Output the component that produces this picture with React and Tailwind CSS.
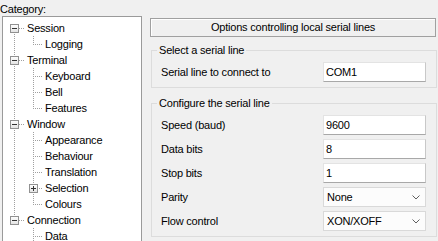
const FONT = { fontFamily: '"Liberation Sans", Arial, sans-serif' };

const tree = [
  { label: "Session", level: 0, box: "minus", top: false, bottom: true },
  { label: "Logging", level: 1, bottom: false, root: true },
  { label: "Terminal", level: 0, box: "minus", top: true, bottom: true },
  { label: "Keyboard", level: 1, bottom: true, root: true },
  { label: "Bell", level: 1, bottom: true, root: true },
  { label: "Features", level: 1, bottom: false, root: true },
  { label: "Window", level: 0, box: "minus", top: true, bottom: true },
  { label: "Appearance", level: 1, bottom: true, root: true },
  { label: "Behaviour", level: 1, bottom: true, root: true },
  { label: "Translation", level: 1, bottom: true, root: true },
  { label: "Selection", level: 1, box: "plus", bottom: true, root: true },
  { label: "Colours", level: 1, bottom: false, root: true },
  { label: "Connection", level: 0, box: "minus", top: true, bottom: false },
  { label: "Data", level: 1, bottom: true, root: false },
];

const DOT = { stroke: "#a0a0a0", strokeWidth: 1, strokeDasharray: "1 1", shapeRendering: "crispEdges" };

function Expander({ x, kind }) {
  return (
    <g shapeRendering="crispEdges">
      <rect x={x - 3.5} y={4.5} width={8} height={8} fill="url(#exp)" stroke="#919191" />
      <line x1={x - 2} y1={8.5} x2={x + 3} y2={8.5} stroke="#333" />
      {kind === "plus" && <line x1={x + 0.5} y1={6} x2={x + 0.5} y2={11} stroke="#333" />}
    </g>
  );
}

function Lines({ row }) {
  const w = row.level === 0 ? 24 : 42;
  return (
    <svg width={w} height={16} className="shrink-0">
      <defs>
        <linearGradient id="exp" x1="0" y1="0" x2="0" y2="1">
          <stop offset="0" stopColor="#ffffff" />
          <stop offset="1" stopColor="#e2e2e2" />
        </linearGradient>
      </defs>
      {row.level === 0 ? (
        <>
          {row.top && <line x1={11.5} y1={0} x2={11.5} y2={8} {...DOT} />}
          {row.bottom && <line x1={11.5} y1={8} x2={11.5} y2={16} {...DOT} />}
          <line x1={16} y1={8.5} x2={22} y2={8.5} {...DOT} />
          <Expander x={11} kind={row.box} />
        </>
      ) : (
        <>
          {row.root && <line x1={11.5} y1={0} x2={11.5} y2={16} {...DOT} />}
          <line x1={30.5} y1={0} x2={30.5} y2={row.bottom ? 16 : 8} {...DOT} />
          <line x1={row.box ? 36 : 30} y1={8.5} x2={40} y2={8.5} {...DOT} />
          {row.box && <Expander x={30} kind={row.box} />}
        </>
      )}
    </svg>
  );
}

function Field({ label, children }) {
  return (
    <div className="flex h-[20px] items-center">
      <span className="w-[162px]">{label}</span>
      {children}
    </div>
  );
}

function Edit({ value }) {
  return (
    <div className="flex h-[20px] w-[103px] items-center border border-[#e3e3e3] border-b-[#a8a8a8] border-r-[#c8c8c8] bg-white px-[2px]">
      {value}
    </div>
  );
}

function Combo({ value }) {
  return (
    <div className="flex h-[20px] w-[103px] items-center justify-between border border-[#d9d9d9] bg-[#fcfcfc] pl-[3px] pr-[5px]">
      <span>{value}</span>
      <svg width="8" height="5" viewBox="0 0 8 5">
        <path d="M0.5 0.5 L4 4 L7.5 0.5" fill="none" stroke="#606060" strokeWidth="1" />
      </svg>
    </div>
  );
}

export default function App() {
  return (
    <div
      className="flex h-[241px] w-[438px] overflow-hidden bg-[#f0f0f0] text-[11px] leading-[13px] tracking-[-0.2px] text-black"
      style={FONT}
    >
      <div className="flex w-[142px] shrink-0 flex-col">
        <div className="mt-[3px] h-[15px]">Category:</div>
        <div className="ml-[2px] h-[240px] border border-[#9a9a9a] bg-white pt-[3px]">
          {tree.map((row) => (
            <div key={row.label} className="flex h-[16px] items-center">
              <Lines row={row} />
              <span className="leading-[16px]">{row.label}</span>
            </div>
          ))}
        </div>
      </div>

      <div className="ml-[8px] flex w-[287px] flex-col pt-[18px]">
        <div className="flex h-[19px] w-[286px] items-center justify-center border border-[#a0a0a0] shadow-[inset_1px_1px_0_#ffffff]">
          Options controlling local serial lines
        </div>

        <fieldset className="mt-[7px] ml-[1px] w-[286px] border border-[#dcdcdc] pb-[5px] pl-[9px]">
          <legend className="-ml-[4px] px-[2px] leading-[13px]">Select a serial line</legend>
          <div className="pt-[5px]">
            <Field label="Serial line to connect to">
              <Edit value="COM1" />
            </Field>
          </div>
        </fieldset>

        <fieldset className="mt-[9px] ml-[1px] w-[286px] border border-[#dcdcdc] pb-[5px] pl-[9px]">
          <legend className="-ml-[4px] px-[2px] leading-[13px]">Configure the serial line</legend>
          <div className="flex flex-col gap-[4px] pt-[5px]">
            <Field label="Speed (baud)">
              <Edit value="9600" />
            </Field>
            <Field label="Data bits">
              <Edit value="8" />
            </Field>
            <Field label="Stop bits">
              <Edit value="1" />
            </Field>
            <Field label="Parity">
              <Combo value="None" />
            </Field>
            <Field label="Flow control">
              <Combo value="XON/XOFF" />
            </Field>
          </div>
        </fieldset>
      </div>
    </div>
  );
}
